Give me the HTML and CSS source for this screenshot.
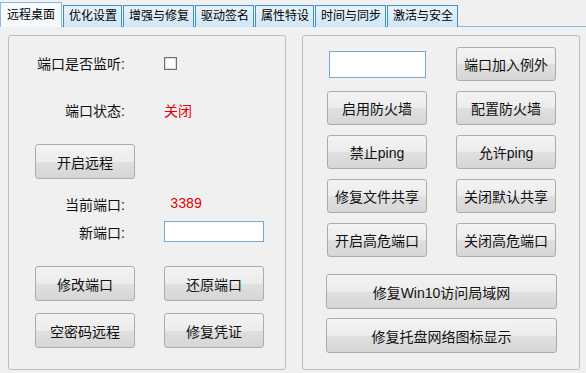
FILE: index.html
```html
<!DOCTYPE html>
<html lang="zh">
	<head>
		<meta charset="UTF-8">
		<title>远程桌面</title>
		<link rel="stylesheet" href="styles.css">
	</head>
	<body>

		<div class="tabs">
			<span class="tab active">远程桌面</span>
			<span class="tab">优化设置</span>
			<span class="tab">增强与修复</span>
			<span class="tab">驱动签名</span>
			<span class="tab">属性特设</span>
			<span class="tab">时间与同步</span>
			<span class="tab">激活与安全</span>
		</div>

		<div class="page">
			<div class="panel left-panel">
				<div class="row row-listen">
					<span class="label">端口是否监听:</span>
					<span class="checkbox"></span>
				</div>
				<div class="row row-status">
					<span class="label">端口状态:</span>
					<span class="value red">关闭</span>
				</div>
				<div class="row row-open">
					<button type="button">开启远程</button>
				</div>
				<div class="row row-current">
					<span class="label">当前端口:</span>
					<span class="value red port">3389</span>
				</div>
				<div class="row row-new">
					<span class="label">新端口:</span>
					<input type="text" class="port-input">
				</div>
				<div class="row row-btns">
					<button type="button">修改端口</button>
					<button type="button">还原端口</button>
				</div>
				<div class="row row-btns2">
					<button type="button">空密码远程</button>
					<button type="button">修复凭证</button>
				</div>
			</div>

			<div class="panel right-panel">
				<div class="grid">
					<div class="cell"><input type="text" class="rule-input"></div>
					<button type="button">端口加入例外</button>
					<button type="button">启用防火墙</button>
					<button type="button">配置防火墙</button>
					<button type="button">禁止ping</button>
					<button type="button">允许ping</button>
					<button type="button">修复文件共享</button>
					<button type="button">关闭默认共享</button>
					<button type="button">开启高危端口</button>
					<button type="button">关闭高危端口</button>
				</div>
				<div class="wide">
					<button type="button">修复Win10访问局域网</button>
					<button type="button">修复托盘网络图标显示</button>
				</div>
			</div>
		</div>

	</body>
</html>
```

FILE: styles.css
```css
* {
    box-sizing: border-box;
    margin: 0;
    padding: 0;
    font-family: "Liberation Sans", "Noto Sans CJK SC", sans-serif;
}
body {
    background-color: #f0f0f0;
    width: 586px;
    height: 373px;
    overflow: hidden;
    color: #111;
}
.tabs {
    display: flex;
    align-items: flex-end;
    height: 27px;
    border-bottom: 1px solid #8fb7d6;
}
.tab {
    height: 22px;
    margin-right: 1px;
    margin-bottom: -1px;
    padding: 0 4px 0 5px;
    border: 1px solid #3f8fcf;
    border-bottom: none;
    background: linear-gradient(#e6f3fc, #cfe7f8);
    font-size: 12px;
    line-height: 21px;
    color: #000;
}
.tab.active {
    height: 25px;
    padding: 0 6px;
    background: #f4f9fd;
    border-color: #8fb7d6;
    line-height: 24px;
}
.page {
    display: flex;
    gap: 16px;
    padding: 8px 0 0 8px;
}
.panel {
    width: 278px;
    height: 335px;
    border: 1px solid #bdbdbd;
    border-radius: 3px;
}
button {
    width: 100px;
    height: 35px;
    border: 1px solid #acacac;
    border-radius: 3px;
    background: linear-gradient(#f3f3f3 0%, #ececec 50%, #e0e0e0 51%, #d6d6d6 100%);
    font-size: 14px;
    color: #111;
}
.left-panel {
    padding: 0 0 0 26px;
}
.row {
    display: flex;
    align-items: center;
    gap: 29px;
}
.label {
    width: 100px;
    padding-right: 10px;
    text-align: right;
    font-size: 14px;
    white-space: nowrap;
}
.value {
    font-size: 14px;
}
.red {
    color: #e00000;
}
.port {
    padding-left: 6px;
    font-family: "Liberation Mono", monospace;
    font-size: 14px;
    letter-spacing: -0.5px;
}
.checkbox {
    width: 13px;
    height: 13px;
    border: 1px solid #6f6f6f;
    background: #fff;
    box-shadow: inset 0 0 0 1px #dcdcdc;
}
.row-listen {
    height: 22px;
    margin-top: 16px;
}
.row-status {
    height: 22px;
    margin-top: 25px;
}
.row-open {
    margin-top: 23px;
}
.row-current {
    height: 22px;
    margin-top: 14px;
}
.row-new {
    height: 21px;
    margin-top: 6px;
}
.port-input {
    width: 100px;
    height: 21px;
    border: 1px solid #7ba8cf;
    background: #fff;
}
.row-btns {
    margin-top: 24px;
}
.row-btns2 {
    margin-top: 12px;
}
.right-panel {
    padding: 11px 0 0 24px;
}
.grid {
    display: grid;
    grid-template-columns: 100px 100px;
    grid-auto-rows: 34px;
    column-gap: 29px;
    row-gap: 10px;
}
.grid button {
    height: 34px;
}
.cell {
    display: flex;
    align-items: center;
    padding-left: 2px;
}
.rule-input {
    width: 97px;
    height: 27px;
    border: 1px solid #7ba8cf;
    background: #fff;
}
.wide {
    display: flex;
    flex-direction: column;
    gap: 9px;
    margin-top: 17px;
    margin-left: -1px;
}
.wide button {
    width: 231px;
    height: 35px;
}
```
